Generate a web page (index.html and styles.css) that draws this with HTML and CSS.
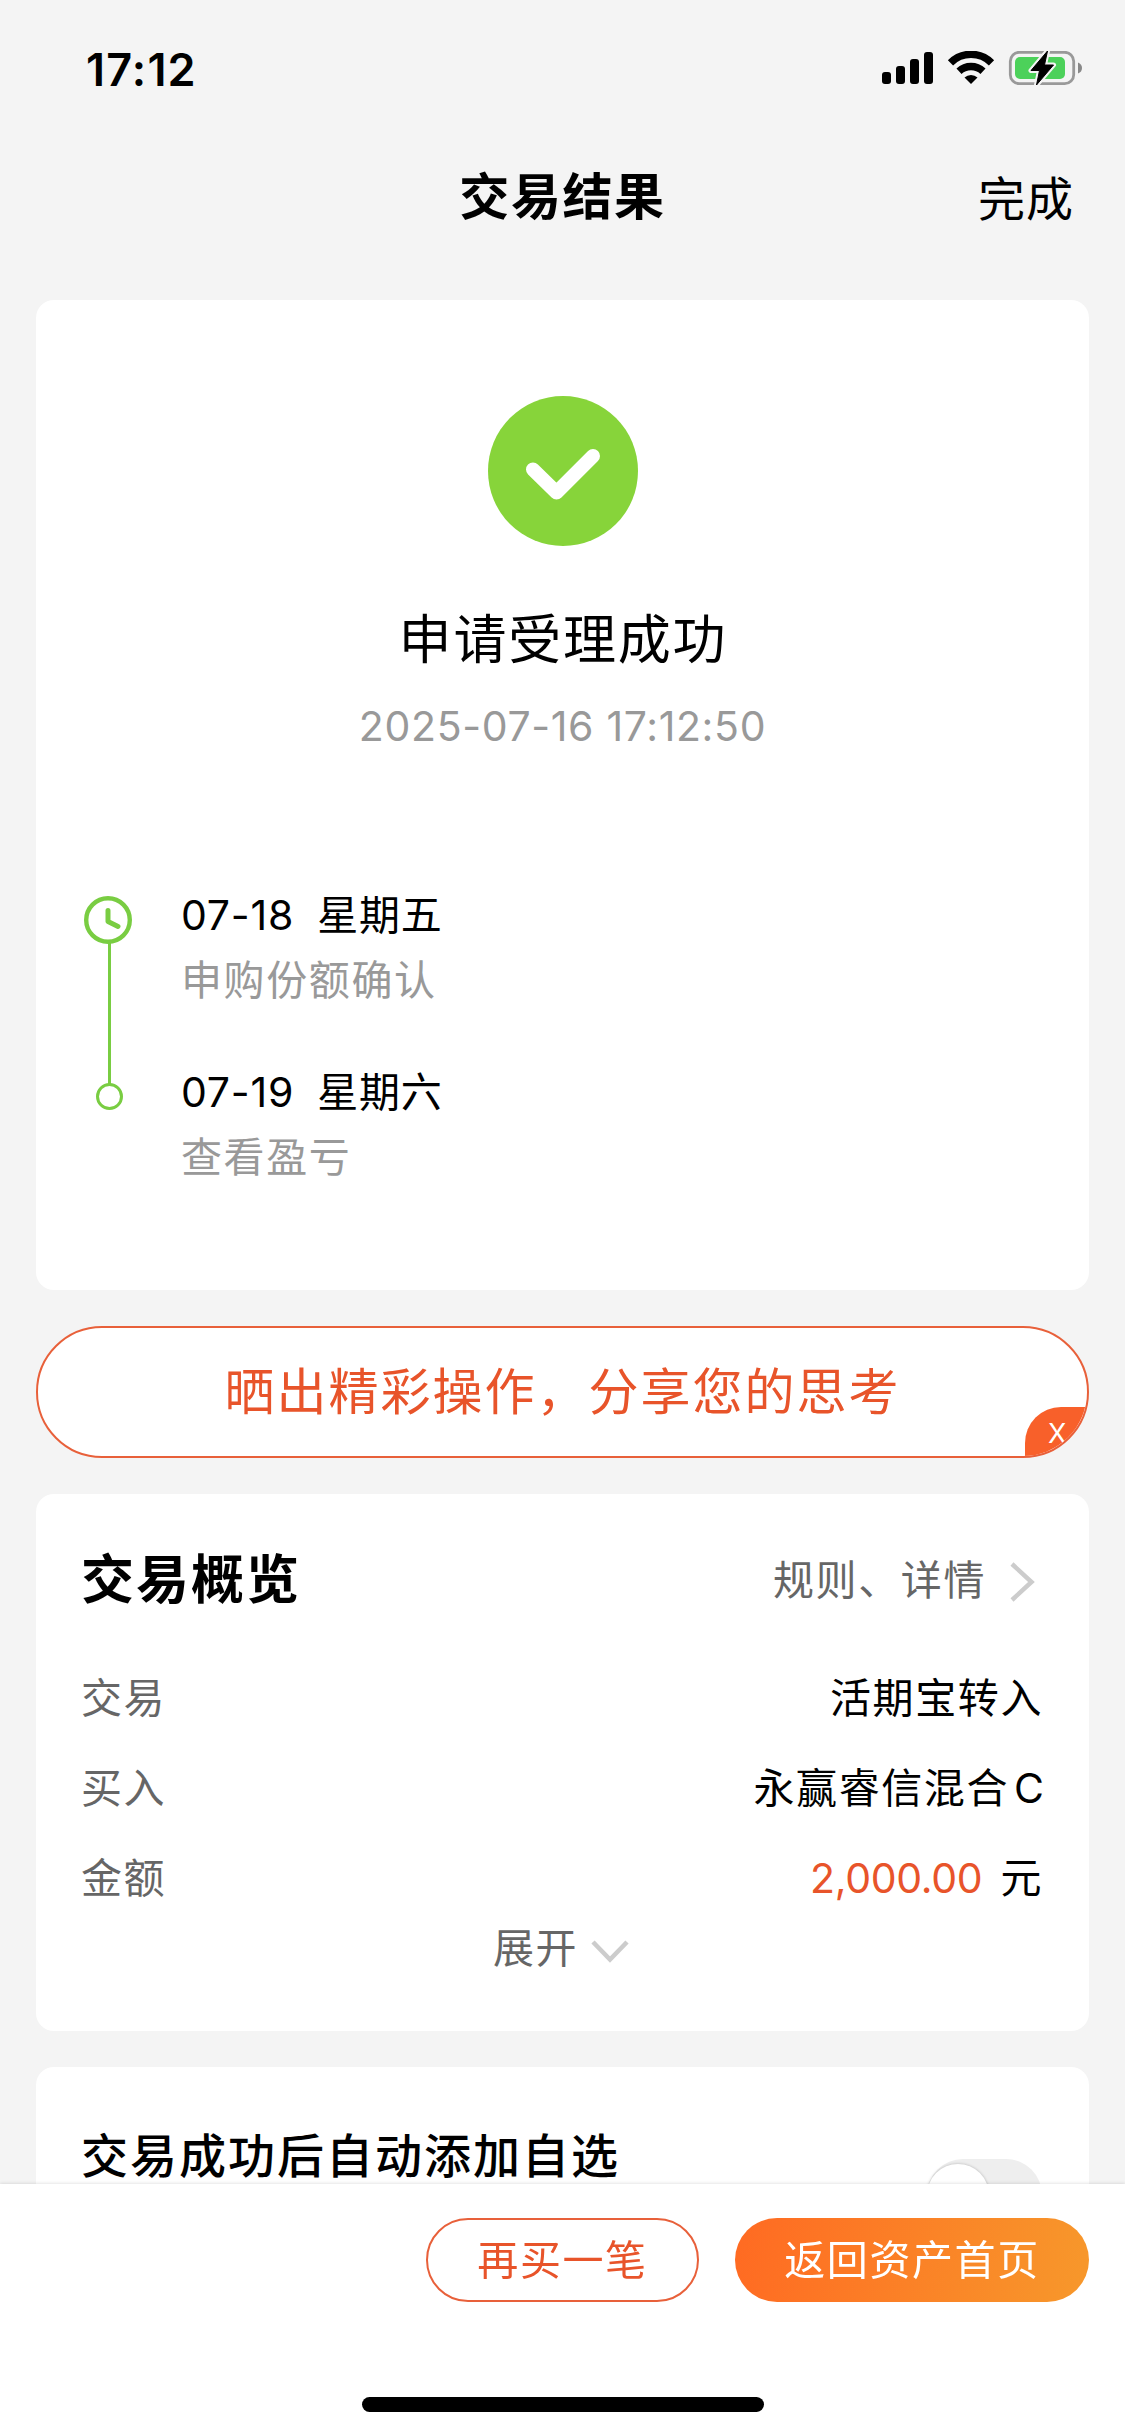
FILE: index.html
```html
<!DOCTYPE html>
<html lang="zh-CN">
<head>
    <meta charset="UTF-8">
    <meta name="viewport" content="width=device-width, initial-scale=1.0">
    <title>交易结果</title>
    <link rel="stylesheet" href="styles.css">
</head>
<body>
    <div class="status-bar">
        <span class="time">17:12</span>
        <svg class="status-icons" width="202" height="36" viewBox="0 0 202 36">
            <!-- signal -->
            <rect x="0" y="21" width="9" height="12" rx="3"/>
            <rect x="14" y="15" width="9" height="18" rx="3"/>
            <rect x="28" y="8" width="9" height="25" rx="3"/>
            <rect x="42" y="1" width="9" height="32" rx="3"/>
            <!-- wifi -->
            <g fill="none" stroke="#000" stroke-width="7.4">
                <path d="M68.500 11.800a29 29 0 0 1 41 0"/>
                <path d="M77 20.300a17.500 17.500 0 0 1 24 0"/>
            </g>
            <path d="M82.500 26.500a9.500 9.500 0 0 1 13 0L89 33z"/>
            <!-- battery -->
            <rect x="128.300" y="1.300" width="63.400" height="31.400" rx="9" fill="none" stroke="#999" stroke-width="2.800"/>
            <rect x="133" y="6" width="50" height="22" rx="5" fill="#4cd15a"/>
            <path d="M196 11.500v11q4-1.500 4-5.500t-4-5.500z" fill="#888"/>
            <path d="M165.500 0L149 19.500h8.500L154.500 34 171.500 14h-9z" stroke="#f4f4f4" stroke-width="5" stroke-linejoin="round"/>
            <path d="M165.500 0L149 19.500h8.500L154.500 34 171.500 14h-9z" stroke="#000" stroke-width="1" stroke-linejoin="round"/>
        </svg>
    </div>

    <div class="navbar">
        <h1>交易结果</h1>
        <a class="done">完成</a>
    </div>

    <div class="content">
        <div class="card result">
            <svg class="check" width="150" height="150" viewBox="0 0 150 150">
                <circle cx="75" cy="75" r="75" fill="#87d43a"/>
                <path d="M45 73.500L68.500 96.500 105 60" fill="none" stroke="#fff" stroke-width="14" stroke-linecap="round" stroke-linejoin="round"/>
            </svg>
            <h2>申请受理成功</h2>
            <p class="result-time">2025-07-16 17:12:50</p>

            <div class="timeline">
                <svg width="48" height="215" viewBox="0 0 48 215" fill="none" stroke="#79cd42">
                    <circle cx="24" cy="24" r="21.800" stroke-width="4.400"/>
                    <path d="M24 14.500v11l10 5" stroke-width="5" stroke-linecap="round" stroke-linejoin="round"/>
                    <path d="M25.500 46v142" stroke-width="3"/>
                    <circle cx="25.500" cy="200.500" r="12" stroke-width="3"/>
                </svg>
                <div class="steps">
                    <div class="step">
                        <p class="step-date"><span class="day">07-18</span><span>星期五</span></p>
                        <p class="step-text">申购份额确认</p>
                    </div>
                    <div class="step">
                        <p class="step-date"><span class="day">07-19</span><span>星期六</span></p>
                        <p class="step-text">查看盈亏</p>
                    </div>
                </div>
            </div>
        </div>

        <div class="share">
            <span class="share-text">晒出精彩操作，分享您的思考</span>
            <span class="share-close">X</span>
        </div>

        <div class="card overview">
            <div class="overview-head">
                <h3>交易概览</h3>
                <a class="detail">
                    <span>规则、详情</span>
                    <svg width="25" height="40" viewBox="0 0 25 40"><path d="M2 2L21.500 20 2 38" fill="none" stroke="#ccc" stroke-width="4.500"/></svg>
                </a>
            </div>
            <div class="row"><span class="label">交易</span><span>活期宝转入</span></div>
            <div class="row"><span class="label">买入</span><span>永赢睿信混合<span class="share-class">C</span></span></div>
            <div class="row"><span class="label">金额</span><span><span class="amount">2,000.00</span>元</span></div>
            <div class="expand">
                <span>展开</span>
                <svg width="38" height="23" viewBox="0 0 38 23"><path d="M2 2L19 19.500 36 2" fill="none" stroke="#ccc" stroke-width="4.500"/></svg>
            </div>
        </div>

        <div class="card favorite">
            <h3>交易成功后自动添加自选</h3>
            <div class="switch"></div>
        </div>
    </div>

    <div class="footer">
        <div class="buttons">
            <a class="btn btn-outline">再买一笔</a>
            <a class="btn btn-primary">返回资产首页</a>
        </div>
        <div class="home-bar"></div>
    </div>
</body>
</html>
```

FILE: styles.css
```css
* {
    box-sizing: border-box;
}

body {
    font-family: Inter, "Noto Sans CJK SC", sans-serif;
    font-size: 41px;
    letter-spacing: 1.6px;
    margin: 0;
    height: 2436px;
    overflow: hidden;
    background-color: #f4f4f4;
    color: #000;
}

h1, h2, h3, p {
    margin: 0;
}

svg {
    display: block;
    flex: none;
}

/* status bar */
.status-bar {
    display: flex;
    justify-content: space-between;
    align-items: center;
    height: 138px;
    padding: 0 41px 0 86px;
}

.time {
    font-size: 45px;
    font-weight: 600;
    letter-spacing: 1.2px;
}

/* nav */
.navbar {
    display: grid;
    grid-template-columns: 1fr auto 1fr;
    align-items: center;
    height: 115px;
    margin-bottom: 47px;
    padding: 0 51px;
}

.navbar h1 {
    grid-column: 2;
    padding-top: 2px;
    font-size: 50px;
    font-weight: 700;
    line-height: 60px;
}

.done {
    justify-self: end;
    font-size: 47px;
    letter-spacing: 1px;
    line-height: 60px;
    padding-top: 7px;
}

/* cards */
.content {
    display: flex;
    flex-direction: column;
    gap: 36px;
    padding: 0 36px;
}

.card {
    background-color: #fff;
    border-radius: 18px;
}

.result {
    display: flex;
    flex-direction: column;
    align-items: center;
    height: 990px;
    padding-top: 96px;
}

.result h2 {
    margin-top: 64px;
    padding-left: 1px;
    font-size: 53px;
    font-weight: 400;
    line-height: 60px;
    letter-spacing: 1.8px;
}

.result-time {
    margin-top: 31px;
    color: #999;
    line-height: 50px;
    letter-spacing: 0.65px;
}

.timeline {
    display: flex;
    align-self: stretch;
    gap: 49px;
    margin-top: 132px;
    padding-left: 48px;
}

.timeline svg {
    margin-top: 13px;
}

.step {
    height: 177px;
    line-height: 65px;
}

.step-date {
    display: flex;
    gap: 23px;
    letter-spacing: 0.8px;
}

.step-text {
    color: #999;
    letter-spacing: 1.6px;
}

/* share banner */
.share {
    position: relative;
    display: flex;
    justify-content: center;
    height: 132px;
    border: 2px solid #e8603a;
    border-radius: 66px;
    background-color: #fff;
    color: #e8542a;
    overflow: hidden;
}

.share-text {
    font-size: 50px;
    line-height: 128px;
    letter-spacing: 2px;
}

.share-close {
    position: absolute;
    right: -2px;
    bottom: -2px;
    width: 64px;
    height: 51px;
    padding-left: 23px;
    border-top-left-radius: 36px;
    background-color: #f8602a;
    color: #fff;
    font-size: 27px;
    line-height: 54px;
    letter-spacing: 0;
}

/* overview */
.overview {
    height: 537px;
    padding: 41px 46px 0 45px;
}

.overview-head {
    display: flex;
    justify-content: space-between;
    height: 90px;
    margin-bottom: 28px;
    line-height: 90px;
}

.overview-head h3 {
    font-size: 53px;
    font-weight: 700;
    letter-spacing: 2px;
}

.detail {
    display: flex;
    align-items: center;
    gap: 24px;
    padding-right: 8px;
    color: #666;
}

.detail svg {
    margin-top: 3px;
}

.row {
    display: flex;
    justify-content: space-between;
    height: 90px;
    line-height: 90px;
}

.label {
    color: #666;
}

.share-class {
    margin-left: 5px;
    font-size: 41px;
    letter-spacing: -1px;
}

.amount {
    margin-right: 18px;
    color: #e8542a;
    letter-spacing: -0.3px;
}

.expand {
    display: flex;
    justify-content: center;
    align-items: center;
    gap: 13px;
    height: 50px;
    padding-right: 2px;
    line-height: 50px;
    color: #666;
}

.expand svg {
    margin-top: 7px;
}

/* auto add to favorites */
.favorite {
    display: flex;
    justify-content: space-between;
    height: 240px;
    padding: 59px 47px 0 45px;
}

.favorite h3 {
    font-size: 47px;
    font-weight: 500;
    line-height: 60px;
    letter-spacing: 2px;
}

.switch {
    width: 115px;
    height: 72px;
    margin-top: 33px;
    padding-top: 5px;
    border-radius: 36px;
    background-color: #eee;
}

.switch::before {
    content: "";
    display: block;
    width: 62px;
    height: 62px;
    border-radius: 50%;
    background-color: #fff;
    box-shadow: 0 0 3px rgba(0, 0, 0, 0.25);
}

/* bottom bar */
.footer {
    position: fixed;
    left: 0;
    right: 0;
    bottom: 0;
    display: flex;
    flex-direction: column;
    align-items: center;
    height: 252px;
    padding-top: 34px;
    background-color: #fff;
    box-shadow: 0 -1px 3px rgba(0, 0, 0, 0.1);
}

.buttons {
    display: flex;
    align-self: flex-end;
    gap: 36px;
    margin-right: 36px;
}

.btn {
    height: 84px;
    border-radius: 42px;
    line-height: 84px;
    text-align: center;
}

.btn-outline {
    width: 273px;
    border: 2px solid #e8603a;
    color: #e8542a;
    line-height: 80px;
}

.btn-primary {
    width: 354px;
    background: linear-gradient(100deg, #ff6a22, #f7982b);
    color: #fff;
}

.home-bar {
    width: 402px;
    height: 15px;
    margin-top: 95px;
    border-radius: 8px;
    background-color: #000;
}
```
